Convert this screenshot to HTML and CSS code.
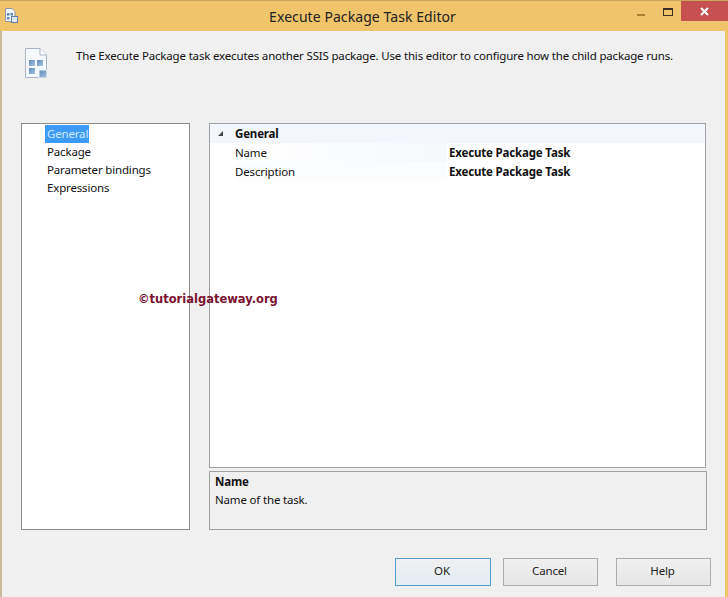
FILE: index.html
```html
<!DOCTYPE html>
<html lang="en">
<head>
<meta charset="utf-8">
<title>Execute Package Task Editor</title>
<link rel="stylesheet" href="styles.css">
</head>
<body>
<div class="window">
  <header class="titlebar">
    <svg class="app-icon" width="18" height="20" viewBox="0 0 18 20">
      <path d="M1.500 1.500H8L11 4.500V14.500H1.500Z" fill="#f4f8fc" stroke="#8d98ad"/>
      <rect x="3" y="6" width="2.500" height="2.500" fill="#5f86b4"/>
      <rect x="6.500" y="6" width="2.500" height="2.500" fill="#5f86b4"/>
      <rect x="3" y="10" width="2.500" height="2.500" fill="#5f86b4"/>
      <rect x="7.500" y="9.500" width="6" height="6" fill="#dfe7f0" stroke="#5f7ea6"/>
    </svg>
    <div class="title">Execute Package Task Editor</div>
    <div class="controls">
      <span class="minimize"></span>
      <span class="maximize"></span>
      <span class="close">
        <svg width="11" height="11" viewBox="0 0 11 11"><path d="M2 2L9 9M9 2L2 9" stroke="#fff" stroke-width="2"/></svg>
      </span>
    </div>
  </header>
  <main class="client">
    <section class="intro">
      <svg class="task-icon" width="32" height="36" viewBox="0 0 32 36">
        <defs>
          <linearGradient id="tile" x1="0" y1="0" x2="1" y2="1">
            <stop offset="0" stop-color="#5f8aba"/>
            <stop offset="1" stop-color="#a9c3de"/>
          </linearGradient>
        </defs>
        <path d="M1.500 1.500H16L22.500 8V30.500H1.500Z" fill="#f5f8fc" stroke="#a9b4c6"/>
        <path d="M16 1.500V8H22.500" fill="#fff" stroke="#a9b4c6"/>
        <rect x="5" y="13" width="6" height="6" fill="url(#tile)"/>
        <rect x="13" y="13" width="6" height="6" fill="url(#tile)"/>
        <rect x="5" y="21" width="6" height="6" fill="url(#tile)"/>
        <rect x="15" y="23" width="8" height="8" fill="url(#tile)" stroke="#eef3f8"/>
      </svg>
      <p class="intro-text">The Execute Package task executes another SSIS package. Use this editor to configure how the child package runs.</p>
    </section>
    <section class="panes">
      <nav class="nav">
        <div class="nav-item"><span class="nav-label selected">General</span></div>
        <div class="nav-item"><span class="nav-label">Package</span></div>
        <div class="nav-item"><span class="nav-label">Parameter bindings</span></div>
        <div class="nav-item"><span class="nav-label">Expressions</span></div>
      </nav>
      <div class="details">
        <div class="grid">
          <div class="row head">
            <div class="gutter"><span class="caret"></span></div>
            <div class="cat">General</div>
          </div>
          <div class="row prop">
            <div class="gutter"></div>
            <div class="name">Name</div>
            <div class="value">Execute Package Task</div>
          </div>
          <div class="row prop">
            <div class="gutter"></div>
            <div class="name">Description</div>
            <div class="value">Execute Package Task</div>
          </div>
        </div>
        <div class="help">
          <div class="help-title">Name</div>
          <div class="help-text">Name of the task.</div>
        </div>
      </div>
    </section>
    <footer class="buttons">
      <button class="btn default">OK</button>
      <button class="btn cancel">Cancel</button>
      <button class="btn">Help</button>
    </footer>
  </main>
  <div class="watermark">©tutorialgateway.org</div>
</div>
</body>
</html>
```
FILE: styles.css
```css
* { box-sizing: border-box; }
html, body { margin: 0; padding: 0; }
body {
  width: 728px;
  height: 597px;
  overflow: hidden;
  font-family: "Noto Sans", "Open Sans", sans-serif;
  font-size: 11.5px;
  letter-spacing: -0.17px;
  color: #111;
}
.window {
  position: relative;
  width: 728px;
  height: 597px;
  display: flex;
  flex-direction: column;
  background: linear-gradient(90deg, #c9b89a 0, #c9b89a 2px, #f0c56a 2px);
  border-top: 1px solid #c9a65c;
}
.titlebar {
  height: 30px;
  flex: none;
  display: flex;
  align-items: center;
  background: #f0c46b;
  position: relative;
}
.app-icon { margin: 2px 0 0 4px; }
.title {
  position: absolute;
  left: 0;
  right: 3px;
  top: 6px;
  text-align: center;
  font-size: 14px;
  letter-spacing: 0.07px;
  line-height: 19px;
  color: #222;
}
.controls {
  margin-left: auto;
  display: flex;
  align-items: flex-start;
  align-self: flex-start;
}
.minimize {
  width: 8px;
  height: 2px;
  margin: 13px 18px 0 0;
  background: #a37f2e;
}
.maximize {
  width: 10px;
  height: 8px;
  margin: 7px 8px 0 0;
  border: 1px solid #3a3020;
  border-top-width: 2px;
}
.close {
  width: 47px;
  height: 20px;
  display: flex;
  align-items: center;
  justify-content: center;
  background: #c75050;
}
.client {
  flex: 1;
  margin: 0 3px 0 2px;
  background: #f0f0f0;
  display: flex;
  flex-direction: column;
  padding-left: 19px;
}
.intro {
  height: 92px;
  flex: none;
  display: flex;
  align-items: flex-start;
  padding-top: 14px;
}
.task-icon { margin: 2px 0 0 3px; flex: none; }
.intro-text {
  margin: 2px 0 0 20px;
  line-height: 17px;
  white-space: nowrap;
}
.panes {
  display: flex;
  height: 407px;
  flex: none;
}
.nav {
  width: 169px;
  height: 407px;
  background: #fff;
  border: 1px solid #8c8c8c;
  padding-top: 1px;
}
.nav-item { height: 18px; padding-left: 23px; }
.nav-label {
  display: inline-block;
  height: 18px;
  line-height: 17px;
  padding: 0 1px 0 2px;
}
.nav-label.selected { background: #3d9bf5; color: #cfe8ff; }
.details {
  width: 498px;
  margin-left: 19px;
  display: flex;
  flex-direction: column;
}
.grid {
  width: 497px;
  height: 345px;
  background: #fff;
  border: 1px solid #a0a0a8;
}
.row { display: flex; height: 19px; line-height: 20px; }
.head { background: #f3f6fc; }
.gutter { width: 25px; flex: none; position: relative; }
.caret {
  position: absolute;
  left: 8px;
  top: 7px;
  width: 0;
  height: 0;
  border-left: 5px solid transparent;
  border-bottom: 5px solid #444;
}
.cat { font-weight: 700; }
.name {
  width: 212px;
  background: linear-gradient(90deg, #fff, #f6f8fc);
}
.value { padding-left: 2px; font-weight: 700; }
.prop:last-child .name { background: #fbfcfe; }
.help {
  margin-top: 3px;
  height: 59px;
  border: 1px solid #a0a0a0;
  padding: 1px 5px;
  line-height: 18px;
}
.help-title { font-weight: 700; }
.buttons {
  display: flex;
  padding: 28px 0 0 374px;
}
.btn {
  width: 95px;
  height: 28px;
  padding: 0 2px 3px 0;
  font: inherit;
  letter-spacing: inherit;
  color: #222;
  background: linear-gradient(#f0f0f0, #e6e6e6);
  border: 1px solid #acacac;
}
.btn.default { width: 96px; border-color: #5b9bc8; background: linear-gradient(#f0f0f0, #e2edf5); }
.btn.cancel { margin: 0 18px 0 12px; }
.watermark {
  position: absolute;
  left: 138px;
  top: 290px;
  font-family: "DejaVu Sans", sans-serif;
  font-size: 11.5px;
  letter-spacing: 0;
  font-weight: 700;
  line-height: 16px;
  color: #7a1230;
  white-space: nowrap;
}
```
